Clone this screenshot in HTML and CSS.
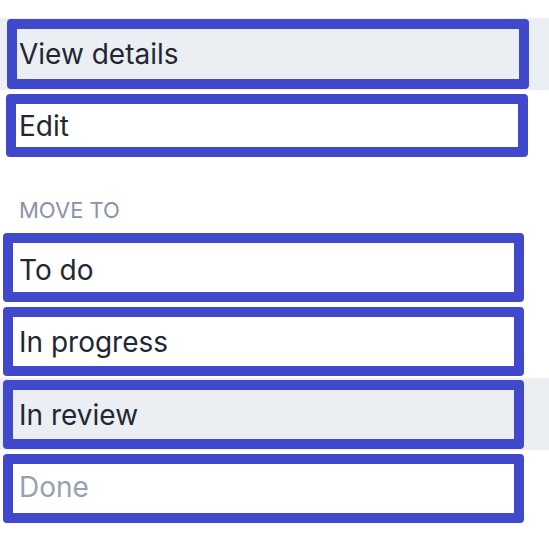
FILE: index.html
```html
<!DOCTYPE html>
<html lang="en">
<head>
<meta charset="utf-8">
<title>Menu</title>
<link rel="stylesheet" href="styles.css">
</head>
<body>
<div class="menu" role="menu">
  <div class="group group-top">
    <div class="row row-hover row-a"><div class="box box-a">View details</div></div>
    <div class="row row-b"><div class="box box-b">Edit</div></div>
  </div>
  <div class="label">MOVE TO</div>
  <div class="group group-move">
    <div class="row row-m"><div class="box box-m shift-2">To do</div></div>
    <div class="row row-m"><div class="box box-m shift-1">In progress</div></div>
    <div class="row row-m row-hover"><div class="box box-m">In review</div></div>
    <div class="row row-m"><div class="box box-m shift-n muted">Done</div></div>
  </div>
</div>
</body>
</html>
```

FILE: styles.css
```css
html, body {
  margin: 0;
  padding: 0;
  background: #ffffff;
}

body {
  font-family: Inter, "Noto Sans", sans-serif;
  color: #222833;
}

.menu {
  display: flex;
  flex-direction: column;
  padding-top: 18px;
}

.group {
  display: flex;
  flex-direction: column;
}

.group-move {
  gap: 1.67px;
}

.row {
  display: flex;
  box-sizing: border-box;
}

.row-hover {
  background: #ebeef2;
}

.box {
  box-sizing: border-box;
  border: 10px solid #4049cc;
  border-radius: 4px;
  display: flex;
  align-items: center;
  font-size: 28px;
  line-height: 1;
  white-space: nowrap;
}

.row-a {
  height: 72px;
  padding: 1px 0 1px 7px;
}

.box-a {
  width: 522px;
  height: 70px;
  padding-left: 2px;
}

.row-b {
  height: 72px;
  padding: 4px 0 0 6px;
}

.box-b {
  width: 522px;
  height: 63px;
  padding-left: 3px;
}

.label {
  margin-top: 32px;
  padding-left: 19px;
  height: 37px;
  font-size: 22px;
  line-height: 33px;
  color: #8a94a6;
}

.row-m {
  height: 72px;
  padding: 2px 0 1px 3px;
}

.box-m {
  width: 521px;
  height: 69px;
  padding-left: 6px;
}

.shift-2 {
  padding-top: 4px;
}

.shift-1 {
  padding-top: 2px;
}

.shift-n {
  padding-bottom: 3px;
}

.muted {
  color: #98a1b0;
}
```
